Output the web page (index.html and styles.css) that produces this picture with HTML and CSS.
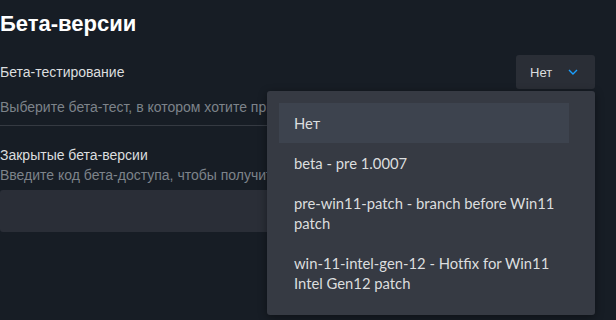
FILE: index.html
```html
<!DOCTYPE html>
<html>
<head>
    <title>Бета-версии</title>
    <link rel="stylesheet" href="styles.css">
</head>
<body>
    <div class="settings">
        <h2 class="title">Бета-версии</h2>

        <div class="row">
            <span class="label">Бета-тестирование</span>
            <div class="select">
                <button class="select-btn">
                    <span>Нет</span>
                    <svg class="chevron" width="10" height="6" viewBox="0 0 10 6">
                        <path d="M1 1 L5 5 L9 1" fill="none" stroke="#1a9fff" stroke-width="1.4"/>
                    </svg>
                </button>
                <ul class="menu">
                    <li class="item selected">Нет</li>
                    <li class="item">beta - pre 1.0007</li>
                    <li class="item">pre-win11-patch - branch before Win11 patch</li>
                    <li class="item">win-11-intel-gen-12 - Hotfix for Win11 Intel Gen12 patch</li>
                </ul>
            </div>
        </div>
        <div class="desc">Выберите бета-тест, в котором хотите принять участие.</div>

        <div class="block">
            <div class="label">Закрытые бета-версии</div>
            <div class="desc tight">Введите код бета-доступа, чтобы получить доступ к закрытым бета-версиям.</div>
            <div class="code-panel"></div>
        </div>
    </div>
</body>
</html>
```

FILE: styles.css
```css
html, body {
    min-height: 320px;
}

body {
    margin: 0;
    background-color: #171d25;
    font-family: "Liberation Sans", Arial, sans-serif;
    color: #dcdedf;
}

.settings {
    width: 595px;
}

.title {
    margin: 0;
    padding-top: 10px;
    font-size: 22px;
    line-height: 28px;
    font-weight: bold;
    color: #ffffff;
}

.row {
    display: flex;
    justify-content: space-between;
    align-items: center;
    margin-top: 17px;
}

.label {
    font-size: 14px;
    line-height: 20px;
    color: #dcdedf;
}

.select {
    position: relative;
}

.select-btn {
    display: flex;
    align-items: center;
    justify-content: space-between;
    width: 79px;
    height: 34px;
    padding: 0 17px 0 14px;
    border: none;
    border-radius: 3px;
    background-color: #2a2e36;
    color: #dcdedf;
    font-family: "Liberation Sans", Arial, sans-serif;
    font-size: 13px;
}

.menu {
    position: absolute;
    right: 0;
    top: calc(100% + 2px);
    width: 328px;
    box-sizing: border-box;
    margin: 0;
    padding: 12px 26px 12px 12px;
    list-style: none;
    background-color: #363a43;
    border-radius: 3px;
    box-shadow: 0 2px 8px rgba(0, 0, 0, 0.4);
    z-index: 2;
}

.item {
    padding: 10px 4px 10px 15px;
    font-family: "Lato", "Liberation Sans", Arial, sans-serif;
    font-size: 14.8px;
    line-height: 20px;
    color: #dcdedf;
}

.item.selected {
    background-color: #3d434e;
}

.desc {
    margin-top: 8px;
    font-size: 14px;
    line-height: 20px;
    color: #7d838a;
    white-space: nowrap;
    overflow: hidden;
    padding-bottom: 8px;
    border-bottom: 1px solid #353a42;
}

.desc.tight {
    margin-top: 0;
    padding-bottom: 0;
    border-bottom: none;
}

.block {
    padding-top: 19px;
}

.code-panel {
    margin-top: 5px;
    height: 42px;
    background-color: #2a2e37;
    border-radius: 3px;
}
```
